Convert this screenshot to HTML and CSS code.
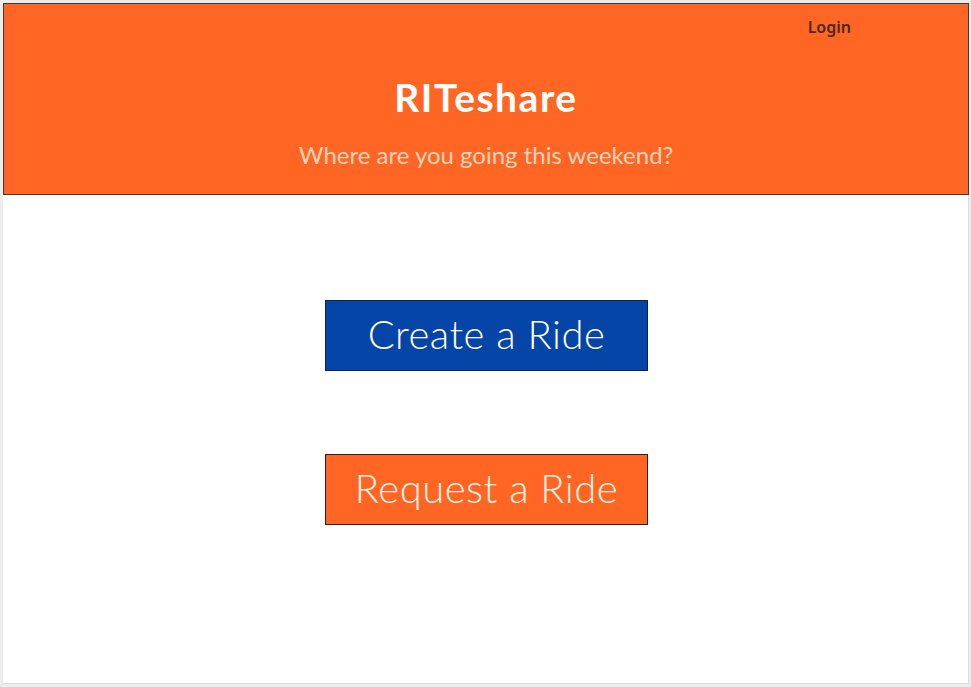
FILE: index.html
```html
<!DOCTYPE html>
<html lang="en">
<head>
    <meta charset="UTF-8">
    <meta name="viewport" content="width=device-width, initial-scale=1.0">
    <title>RITeshare</title>
    <link rel="stylesheet" href="styles.css">
</head>
<body>
    <div class="page">
        <div class="header">
            <div class="nav">
                <a href="#" class="login-link">Login</a>
            </div>
            <h1 class="title">RITeshare</h1>
            <p class="subtitle">Where are you going this weekend?</p>
        </div>

        <div class="actions">
            <a href="#" class="ride-button create">Create a Ride</a>
            <a href="#" class="ride-button request">Request a Ride</a>
        </div>
    </div>
</body>
</html>
```

FILE: styles.css
```css
body {
    margin: 0;
    padding: 3px 2px 3px 3px;
    background-color: #ececec;
    font-family: Lato, "Open Sans", sans-serif;
}

.page {
    box-sizing: border-box;
    height: 681px;
    background-color: #fff;
    border-right: 1px solid #dcdcdc;
    border-bottom: 1px solid #dcdcdc;
}

.header {
    box-sizing: border-box;
    height: 192px;
    margin-right: -1px;
    background-color: #ff6624;
    border: 1px solid #3b3b3b;
    text-align: center;
}

.nav {
    text-align: right;
    padding: 12px 117px 0 0;
    height: 28px;
}

.login-link {
    font-family: "Noto Sans", sans-serif;
    font-size: 16px;
    font-weight: 600;
    color: #4a2a14;
    text-decoration: none;
}

.title {
    margin: 30px 0 0;
    font-size: 39px;
    font-weight: bold;
    color: #fff;
    letter-spacing: 1.5px;
    line-height: 46px;
}

.subtitle {
    margin: 21px 0 0;
    font-size: 24px;
    color: #ffd3b8;
    line-height: 28px;
}

.actions {
    display: flex;
    flex-direction: column;
    align-items: center;
    gap: 83px;
    padding: 105px 0 0 2px;
}

.ride-button {
    box-sizing: border-box;
    width: 323px;
    height: 71px;
    padding-bottom: 4px;
    display: flex;
    align-items: center;
    justify-content: center;
    border: 1px solid #1a1a1a;
    font-size: 40px;
    font-weight: 300;
    letter-spacing: 0.5px;
    text-decoration: none;
}

.create {
    background-color: #0645a8;
    color: #fff;
    border-color: #0b2250;
}

.request {
    background-color: #ff6624;
    color: #fff3ea;
    border-color: #3a1a08;
}
```
